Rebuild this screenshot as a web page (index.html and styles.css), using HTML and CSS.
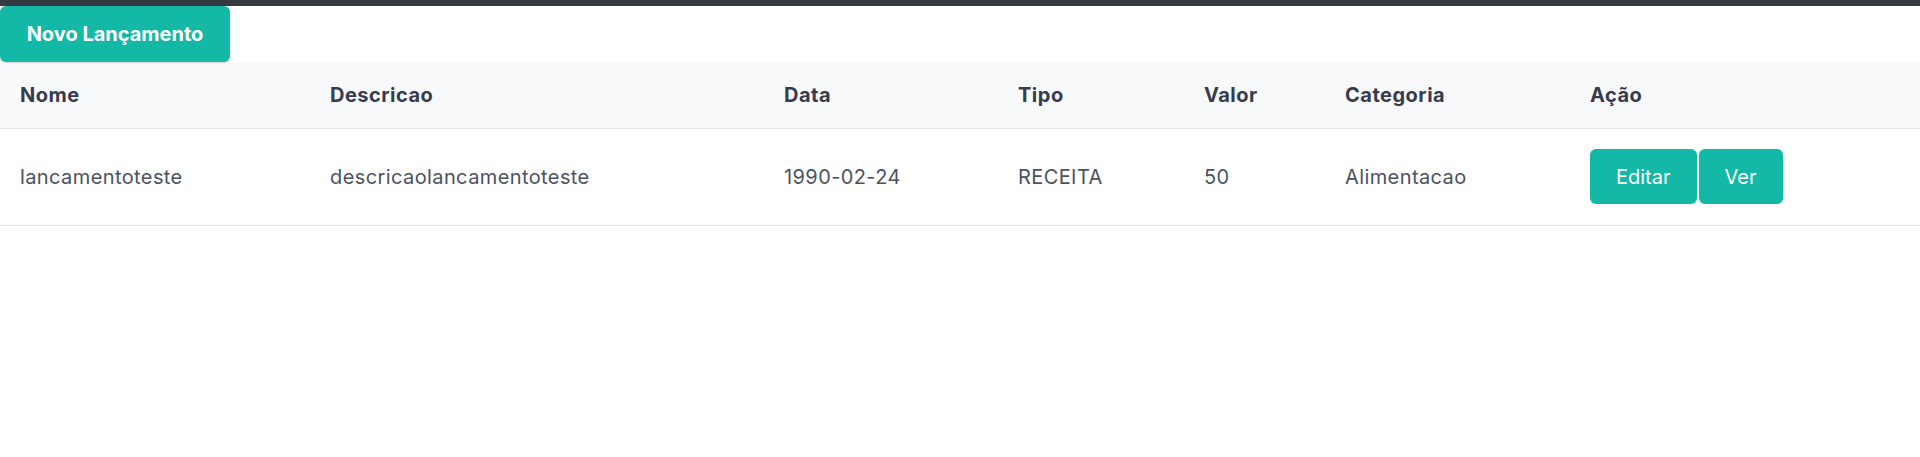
FILE: index.html
```html
<!DOCTYPE html>
<html lang="pt-BR">
<head>
<meta charset="utf-8">
<title>Lançamentos</title>
<link rel="stylesheet" href="styles.css">
</head>
<body>
<div class="topbar"></div>
<main class="page">
  <div class="actions">
    <button class="btn btn-primary">Novo Lançamento</button>
  </div>
  <table class="table">
    <colgroup>
      <col class="c-nome">
      <col class="c-desc">
      <col class="c-data">
      <col class="c-tipo">
      <col class="c-valor">
      <col class="c-cat">
      <col class="c-acao">
    </colgroup>
    <thead>
      <tr>
        <th>Nome</th>
        <th>Descricao</th>
        <th>Data</th>
        <th>Tipo</th>
        <th>Valor</th>
        <th>Categoria</th>
        <th>Ação</th>
      </tr>
    </thead>
    <tbody>
      <tr>
        <td>lancamentoteste</td>
        <td>descricaolancamentoteste</td>
        <td>1990-02-24</td>
        <td>RECEITA</td>
        <td>50</td>
        <td>Alimentacao</td>
        <td>
          <div class="row-actions">
            <button class="btn btn-small">Editar</button>
            <button class="btn btn-small">Ver</button>
          </div>
        </td>
      </tr>
    </tbody>
  </table>
</main>
</body>
</html>
```

FILE: styles.css
```css
* { box-sizing: border-box; }

html, body {
  margin: 0;
  padding: 0;
  background: #ffffff;
  font-family: Inter, "Noto Sans", sans-serif;
}

.topbar {
  height: 6px;
  background: #343a40;
}

.actions {
  display: flex;
}

.btn {
  border: none;
  background: #14b8a6;
  color: #ffffff;
  font-family: Inter, "Noto Sans", sans-serif;
  cursor: pointer;
}

.btn-primary {
  width: 230px;
  height: 56px;
  border-radius: 6px;
  font-size: 20px;
  font-weight: 700;
  box-shadow: 0 1px 2px rgba(0, 0, 0, 0.15);
}

.table {
  width: 100%;
  border-collapse: collapse;
  table-layout: fixed;
}

.c-nome { width: 310px; }
.c-desc { width: 454px; }
.c-data { width: 234px; }
.c-tipo { width: 186px; }
.c-valor { width: 141px; }
.c-cat { width: 245px; }
.c-acao { width: 350px; }

.table th {
  background: #f8f9fb;
  height: 66px;
  padding: 0 20px;
  text-align: left;
  font-size: 20px;
  font-weight: 700;
  letter-spacing: 0.5px;
  color: #363b4d;
  border-bottom: 1px solid #e3e5e9;
}

.table td {
  height: 97px;
  padding: 0 20px;
  font-size: 20px;
  font-weight: 400;
  letter-spacing: 0.4px;
  color: #4b5260;
  border-bottom: 1px solid #e3e5e9;
}

.row-actions {
  display: flex;
  gap: 2px;
}

.btn-small {
  height: 55px;
  padding: 0 26px;
  border-radius: 6px;
  font-size: 20px;
  font-weight: 400;
  letter-spacing: 0;
}
```
